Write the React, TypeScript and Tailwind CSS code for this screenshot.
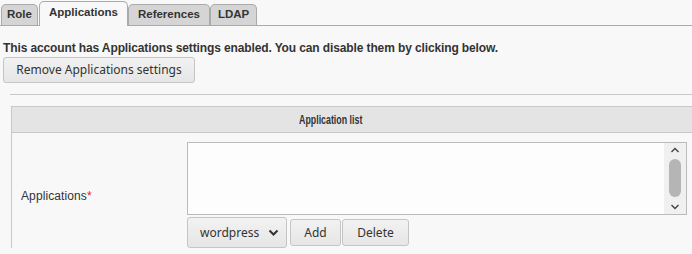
import React from "react";

export default function App() {
  const tabBase =
    "border border-[#aaaaaa] border-b-0 rounded-t-[5px] font-bold text-[11.5px] text-[#333] flex items-center";
  const btnFont = { fontFamily: '"Noto Sans", "Open Sans", sans-serif' };
  return (
    <div className="w-[692px] h-[254px] overflow-hidden bg-[#f8f8f8] text-[#333]" style={{ fontFamily: '"Liberation Sans", Arial, sans-serif' }}>
      {/* Tabs */}
      <div className="flex items-end h-[26px] border-b border-[#aaaaaa] pl-[1px]">
        <div className={tabBase + " h-[21px] px-[5px] bg-[#d5d5d5]"}>Role</div>
        <div className={tabBase + " h-[25px] px-[9px] pb-[3px] bg-[#f8f8f8] -mb-px ml-[1px]"}>Applications</div>
        <div className={tabBase + " h-[21px] px-[9px] bg-[#d5d5d5]"}>References</div>
        <div className={tabBase + " h-[21px] px-[7px] bg-[#d5d5d5]"}>LDAP</div>
      </div>

      <div className="pl-[3px] pt-[15px] font-bold text-[12px] tracking-[-0.12px] leading-[14px]">
        This account has Applications settings enabled. You can disable them by clicking below.
      </div>
      <div className="pl-[3px] pt-[2px]">
        <button
          className="h-[26px] w-[192px] border border-[#c5c5c5] rounded-[3px] bg-gradient-to-b from-[#f2f2f2] to-[#e6e6e6] text-[12px] text-[#333]"
          style={btnFont}
        >
          Remove Applications settings
        </button>
      </div>

      <div className="ml-[10px] mt-[11px] border-t border-[#c8c8c8]" />

      <div className="ml-[11px] mt-[11px] border-l border-t border-[#c8c8c8]">
        <div className="h-[26px] bg-[#e4e4e5] border-b border-[#c8c8c8] flex items-center pl-[287px]">
          <span className="inline-block origin-left scale-x-[0.68] font-bold text-[13px] text-[#333]">
            Application list
          </span>
        </div>
        <div className="flex pt-[9px]">
          <div className="w-[175px] flex items-center pl-[9px] pt-[2px] text-[12px] text-[#333] tracking-[0.1px]">
            Applications<span className="text-[#e02020]">*</span>
          </div>
          <div className="flex flex-col">
            <div className="w-[500px] h-[73px] border border-[#bbbbbb] bg-[#fdfdfd] flex justify-end">
              <div className="w-[22px] h-full bg-[#f0f0f0] flex flex-col items-center justify-between py-[4px]">
                <svg width="10" height="6" viewBox="0 0 10 6"><path d="M1.5 5 L5 1.5 L8.5 5" stroke="#444" strokeWidth="1.4" fill="none" /></svg>
                <div className="w-[12px] h-[38px] rounded-full bg-[#b5b5b5] -mt-[2px]" />
                <svg width="10" height="6" viewBox="0 0 10 6"><path d="M1.5 1 L5 4.5 L8.5 1" stroke="#444" strokeWidth="1.4" fill="none" /></svg>
              </div>
            </div>
            <div className="flex items-start gap-[3px] pt-[2px]" style={btnFont}>
              <div className="w-[100px] h-[31px] border border-[#c5c5c5] rounded-[3px] bg-gradient-to-b from-[#f2f2f2] to-[#e6e6e6] flex items-center pl-[12px] gap-[9px] text-[12px] text-[#333]">
                wordpress
                <svg width="11" height="8" viewBox="0 0 11 8"><path d="M1.5 1.5 L5.5 5.5 L9.5 1.5" stroke="#333" strokeWidth="2" fill="none" /></svg>
              </div>
              <button className="mt-[2px] h-[27px] w-[51px] border border-[#c5c5c5] rounded-[3px] bg-gradient-to-b from-[#f2f2f2] to-[#e6e6e6] text-[12px] text-[#333]">Add</button>
              <button className="mt-[2px] -ml-[2px] h-[27px] w-[67px] border border-[#c5c5c5] rounded-[3px] bg-gradient-to-b from-[#f2f2f2] to-[#e6e6e6] text-[12px] text-[#333]">Delete</button>
            </div>
          </div>
        </div>
      </div>
    </div>
  );
}
